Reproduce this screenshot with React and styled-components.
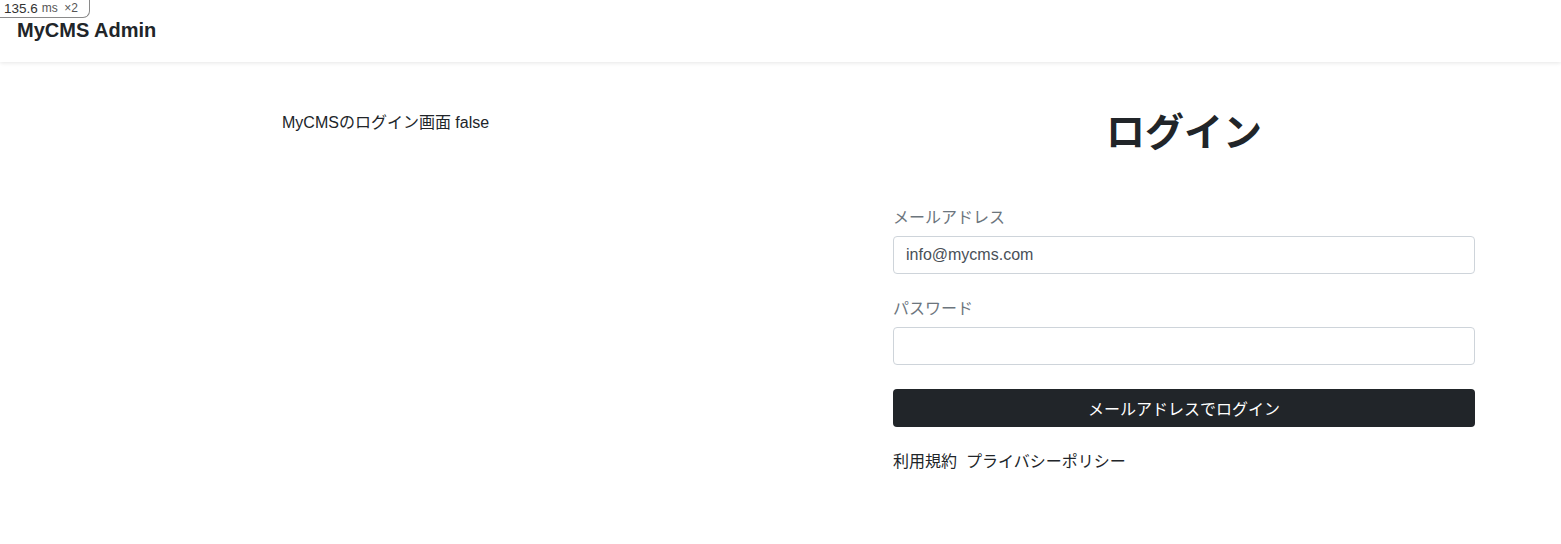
import React from "react";
import styled, { createGlobalStyle } from "styled-components";

const GlobalStyle = createGlobalStyle`
  body {
    margin: 0;
    font-family: "Liberation Sans", "Noto Sans CJK JP", sans-serif;
    color: #212529;
    background: #fff;
  }
  * { box-sizing: border-box; }
`;

const Header = styled.header`
  height: 62px;
  display: flex;
  align-items: center;
  padding: 0 17px 2px;
  box-shadow: 0 1px 4px rgba(0, 0, 0, 0.1);
`;

const Brand = styled.div`
  font-size: 20px;
  font-weight: 700;
  color: #212529;
`;

const TimingBadge = styled.div`
  position: absolute;
  top: 0;
  left: 0;
  height: 18px;
  width: 90px;
  padding: 0 0 1px 4px;
  display: flex;
  align-items: center;
  gap: 4px;
  font-size: 13.5px;
  color: #333;
  border: 1px solid #8a8a8a;
  border-top: none;
  border-left: none;
  border-bottom-right-radius: 7px;
  background: #fff;
`;

const Unit = styled.span`
  color: #555;
  font-size: 12px;
  word-spacing: 3px;
`;

const Main = styled.main`
  display: grid;
  grid-template-columns: 611px 606px;
  margin-left: 270px;
  padding-top: 47px;
`;

const Column = styled.section`
  padding: 0 12px;
`;

const Intro = styled.p`
  margin: 2px 0 0;
  font-size: 16px;
  line-height: 24px;
`;

const Title = styled.h1`
  margin: 0 0 49px;
  text-align: center;
  font-size: 39px;
  line-height: 48px;
  font-weight: 700;
`;

const Field = styled.div`
  margin-bottom: 23px;
`;

const Label = styled.label`
  display: block;
  margin-bottom: 6px;
  font-size: 16px;
  line-height: 24px;
  color: #6c757d;
`;

const Input = styled.input`
  display: block;
  width: 100%;
  height: 38px;
  padding: 6px 12px;
  font-family: inherit;
  font-size: 16px;
  color: #495057;
  border: 1px solid #ced4da;
  border-radius: 4px;
  outline: none;
`;

const SubmitButton = styled.button`
  display: block;
  width: 100%;
  height: 38px;
  margin-top: 24px;
  border: none;
  border-radius: 4px;
  background: #212529;
  color: #fff;
  font-family: inherit;
  font-size: 16px;
`;

const Links = styled.div`
  display: flex;
  gap: 9px;
  margin-top: 23px;
  font-size: 16px;
  line-height: 24px;
`;

const Link = styled.a`
  color: #212529;
  text-decoration: none;
`;

export default function App() {
  return (
    <>
      <GlobalStyle />
      <TimingBadge>
        135.6 <Unit>ms ×2</Unit>
      </TimingBadge>
      <Header>
        <Brand>MyCMS Admin</Brand>
      </Header>
      <Main>
        <Column>
          <Intro>MyCMSのログイン画面 false</Intro>
        </Column>
        <Column>
          <Title>ログイン</Title>
          <Field>
            <Label>メールアドレス</Label>
            <Input type="email" defaultValue="info@mycms.com" />
          </Field>
          <Field>
            <Label>パスワード</Label>
            <Input type="password" />
          </Field>
          <SubmitButton>メールアドレスでログイン</SubmitButton>
          <Links>
            <Link href="#">利用規約</Link>
            <Link href="#">プライバシーポリシー</Link>
          </Links>
        </Column>
      </Main>
    </>
  );
}
